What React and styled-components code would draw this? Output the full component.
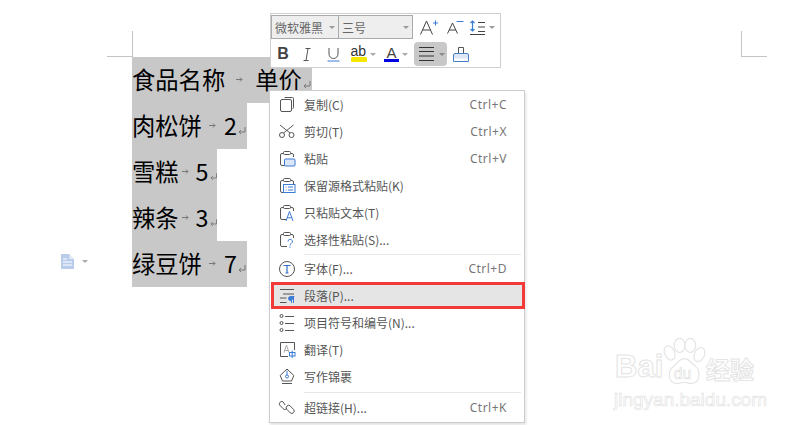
import styled, { createGlobalStyle } from "styled-components";

const GlobalStyle = createGlobalStyle`
  html, body {
    margin: 0;
    background: #fff;
    overflow: hidden;
  }
  #root {
    width: 801px;
    height: 425px;
  }
`;

const YAHEI = `"Noto Sans CJK SC", "Liberation Sans", sans-serif`;

const lines = [
  { name: "食品名称", tab1: 11, tab2: 12, price: "单价", tail: 10 },
  { name: "肉松饼", tab1: 7, tab2: 8, price: "2", tail: 10 },
  { name: "雪糕", tab1: 3.5, tab2: 6.5, price: "5", tail: 8.5 },
  { name: "辣条", tab1: 3.5, tab2: 6.5, price: "3", tail: 8.5 },
  { name: "绿豆饼", tab1: 7, tab2: 8, price: "7", tail: 10 },
];

const blue = "#3a7bd5";
const dark = "#555";

function Svg({ children }) {
  return (
    <svg width="18" height="18" viewBox="0 0 18 18" fill="none" stroke={dark} strokeWidth="1">
      {children}
    </svg>
  );
}

const CopyIcon = () => (
  <Svg><path d="M6.500 1.500h8a1 1 0 0 1 1 1v9a1 1 0 0 1-1 1" /><rect x="2.500" y="3.500" width="11" height="12" rx="1.500" /></Svg>
);
const CutIcon = () => (
  <Svg>
    <circle cx="4" cy="12" r="2.500" /><circle cx="13.500" cy="12" r="2.500" />
    <path d="M5.500 10 15.500 2M12 10 2 2" />
  </Svg>
);
const Clipboard = ({ children }) => (
  <Svg>
    <path d="M9 15.500H4A1.500 1.500 0 0 1 2.500 14V5A1.500 1.500 0 0 1 4 3.500h10A1.500 1.500 0 0 1 15.500 5v2" />
    <rect x="5.500" y="1.500" width="7" height="3" rx="1" fill="#fff" />
    {children}
  </Svg>
);
const PasteIcon = () => (
  <Clipboard><rect x="6.500" y="9" width="10.500" height="7" rx="1" fill="#dbe7f8" stroke={blue} /></Clipboard>
);
const KeepIcon = () => (
  <Clipboard>
    <rect x="5.500" y="7.500" width="11.500" height="8" fill="#fff" stroke={blue} />
    <path d="M7.500 10h1M7.500 13h1M10 10h5M10 13h5" stroke={blue} />
  </Clipboard>
);
const TextPasteIcon = () => (
  <Clipboard><path d="M8 17 11.500 7.500 15 17M9.200 13.800h4.600" stroke={blue} fill="#fff" /></Clipboard>
);
const SpecialIcon = () => (
  <Clipboard><path d="M10 10.500a2.200 2.200 0 1 1 3.300 1.900c-.9.500-1.300 1-1.300 2M12 15.500v1.200" stroke={blue} /></Clipboard>
);
const FontIcon = () => (
  <Svg><circle cx="9" cy="9" r="7.500" /><path d="M5.500 5.500h7M9 5.500v7.500M7.500 13h3" stroke="#2f6fc4" strokeWidth="1.200" /></Svg>
);
const ParagraphIcon = () => (
  <Svg>
    <path d="M2 2.500h14M5 7h11M2 11h6.500M2 15.500h6.500" />
    <path d="M13.500 9.500v6.500M15.500 9.500v6.500" stroke={blue} />
    <path d="M16 9.500h-3.500a2 2 0 0 0 0 4h1z" fill={blue} stroke={blue} />
  </Svg>
);
const ListIcon = () => (
  <Svg>
    <circle cx="3.500" cy="2" r="1.500" /><circle cx="3.500" cy="9" r="1.500" /><circle cx="3.500" cy="16" r="1.500" />
    <path d="M7 2.500h9M7 9.500h9M7 16.500h9" />
  </Svg>
);
const TranslateIcon = () => (
  <Svg>
    <path d="M10 15.500H2.500v-14h14V9" />
    <path d="M6 11.500 8.500 4l2.500 7.500M7 9.500h3" stroke="#aaa" />
    <rect x="11.500" y="11.500" width="5.500" height="3.500" stroke={blue} /><path d="M14.200 9.500v7.500" stroke={blue} />
  </Svg>
);
const PenIcon = () => (
  <Svg>
    <path d="M9 1 15.800 7.500 13.500 13h-9L2.200 7.500zM4 15.500h10" />
    <path d="M9 2.500V7" stroke={blue} /><circle cx="9" cy="8.500" r="1.500" stroke={blue} />
  </Svg>
);
const LinkIcon = () => (
  <Svg>
    <path d="M7.200 6 5 2.800a2.400 2.400 0 0 0-3.300 3.300l3.400 3.600a2.400 2.400 0 0 0 3.400.1" />
    <path d="M9 7a2.400 2.400 0 0 1 3.400.1l3.300 3.500a2.400 2.400 0 0 1-3.300 3.400L9 10.500A2.400 2.400 0 0 1 9 7Z" />
  </Svg>
);

const menuGroups = [
  {
    pad: 2,
    items: [
      { icon: <CopyIcon />, label: "复制(C)", keys: "Ctrl+C" },
      { icon: <CutIcon />, label: "剪切(T)", keys: "Ctrl+X" },
      { icon: <PasteIcon />, label: "粘贴", keys: "Ctrl+V" },
      { icon: <KeepIcon />, label: "保留源格式粘贴(K)" },
      { icon: <TextPasteIcon />, label: "只粘贴文本(T)" },
      { icon: <SpecialIcon />, label: "选择性粘贴(S)..." },
    ],
  },
  {
    pad: 3,
    items: [
      { icon: <FontIcon />, label: "字体(F)...", keys: "Ctrl+D" },
      { icon: <ParagraphIcon />, label: "段落(P)...", marked: true },
      { icon: <ListIcon />, label: "项目符号和编号(N)..." },
      { icon: <TranslateIcon />, label: "翻译(T)" },
      { icon: <PenIcon />, label: "写作锦裹" },
    ],
  },
  { pad: 0, items: [{ icon: <LinkIcon />, label: "超链接(H)...", keys: "Ctrl+K" }] },
];

export default function App() {
  return (
    <Page>
      <GlobalStyle />
      <CropRow>
        <CropMark $side="left" />
        <CropMark $side="right" />
      </CropRow>

      <Doc>
        {lines.map((line) => (
          <TextLine key={line.name}>
            {line.name}
            <TabMark $before={line.tab1} $after={line.tab2}>
              <svg width="7" height="7" viewBox="0 0 7 7" fill="none" stroke="#777">
                <path d="M0 3.500h6M4 1.500l2 2-2 2" />
              </svg>
            </TabMark>
            {line.price}
            <ReturnMark $width={line.tail}>
              <svg width="8" height="8" viewBox="0 0 8 8" fill="none" stroke="#777">
                <path d="M7 0v5H1M3 3 1 5l2 2" />
              </svg>
            </ReturnMark>
          </TextLine>
        ))}
      </Doc>

      <SideDoc>
        <svg width="14" height="15" viewBox="0 0 14 15">
          <path d="M0 0h8l5 5v10H0z" fill="#b9cdea" />
          <path d="M8.500 0.500 13 5H8.500z" fill="#e4ecf8" />
          <path d="M2 5h4M2 8h9M2 11h9" stroke="#fff" />
        </svg>
        <Caret $color="#aaa" />
      </SideDoc>

      <Toolbar>
        <ToolRow>
          <Combo $width={68}>
            微软雅黑
            <Caret $color="#999" />
          </Combo>
          <Combo $width={75}>
            三号
            <Caret $color="#999" />
          </Combo>
          <ToolCell $width={34}>
            <svg width="18" height="15" viewBox="0 0 18 15" fill="none" stroke="#444">
              <path d="M0.500 14.500 6.500 1l6 13.500M2.500 10h8" />
              <path d="M13 3h5M15.500 0.500v5" stroke={blue} />
            </svg>
          </ToolCell>
          <ToolCell $width={18}>
            <svg width="17" height="14" viewBox="0 0 17 14" fill="none" stroke="#444">
              <path d="M0.500 13.500 5.500 3l5 10.500M2 10h7" />
              <path d="M9.500 1.500h7" stroke={blue} />
            </svg>
          </ToolCell>
          <ToolCell $width={36} $gap={4}>
            <svg width="15" height="15" viewBox="0 0 15 15" fill="none" stroke="#444">
              <path d="M8 2.500h7M8 7h7M8 11.500h7M0 14.500h15" />
              <path d="M2.500 1v10M0.500 3l2-2 2 2M0.500 9l2 2 2-2" stroke={blue} strokeWidth="1.200" />
            </svg>
            <Caret $color="#999" />
          </ToolCell>
        </ToolRow>
        <ToolRow>
          <ToolCell $width={24}><BoldGlyph>B</BoldGlyph></ToolCell>
          <ToolCell $width={23}>
            <svg width="8" height="13" viewBox="0 0 8 13" fill="none" stroke="#555">
              <path d="M2.500 0.500h5M5 0.500 3 12.500M0.500 12.500h5" />
            </svg>
          </ToolCell>
          <ToolCell $width={30}>
            <svg width="13" height="15" viewBox="0 0 13 15" fill="none" stroke="#555">
              <path d="M2 1v6a4.500 4.500 0 0 0 9 0V1" />
              <path d="M0.500 14h12" stroke={blue} />
            </svg>
          </ToolCell>
          <ToolCell $width={30}>
            <Highlighter>
              ab
              <svg width="16" height="5" viewBox="0 0 16 5"><rect width="16" height="5" rx="1" fill="#f5e700" /></svg>
            </Highlighter>
            <Caret $color="#aaa" />
          </ToolCell>
          <ToolCell $width={36}>
            <FontColor>
              A
              <svg width="15" height="3" viewBox="0 0 15 3"><rect width="15" height="3" fill="#0000e0" /></svg>
            </FontColor>
            <Caret $color="#aaa" />
          </ToolCell>
          <ToolCell $width={33} $active $gap={5}>
            <svg width="15" height="14" viewBox="0 0 15 14" stroke="#333">
              <path d="M0 0.500h15M0 4.500h15M0 9h15M0 13.500h15" />
            </svg>
            <Caret $color="#888" />
          </ToolCell>
          <ToolCell $width={27}>
            <svg width="16" height="16" viewBox="0 0 16 16" fill="none">
              <path d="M5.500 7.500V1.500h5v6" stroke="#555" />
              <path d="M0.500 15.500V9a1.500 1.500 0 0 1 1.500-1.500h12A1.500 1.500 0 0 1 15.500 9v6.500z" fill="#dce6f5" stroke="#4a7fc8" />
              <path d="M1 12.500h14v2.500H1z" fill="#fff" />
            </svg>
          </ToolCell>
        </ToolRow>
      </Toolbar>

      <Menu>
        {menuGroups.map((group, i) => (
          <MenuGroup key={i} $pad={group.pad}>
            {group.items.map((item) => (
              <MenuItem key={item.label} $marked={item.marked}>
                <MenuIcon>{item.icon}</MenuIcon>
                <MenuLabel>{item.label}</MenuLabel>
                {item.keys && <MenuKeys>{item.keys}</MenuKeys>}
              </MenuItem>
            ))}
          </MenuGroup>
        ))}
      </Menu>

      <Watermark>
        <BaiWord>Bai</BaiWord>
        <svg width="43" height="48" viewBox="0 0 52 58" fill="#fff" stroke="#e4e4e4" strokeWidth="1.400">
          <ellipse cx="8" cy="18" rx="6" ry="9" transform="rotate(-25 8 18)" />
          <ellipse cx="20" cy="9" rx="6.500" ry="8.500" />
          <ellipse cx="33" cy="9" rx="6.500" ry="8.500" />
          <ellipse cx="44" cy="20" rx="6" ry="9" transform="rotate(25 44 20)" />
          <path d="M26 25c6 0 8 6 13 9 6 4 7 20-4 21-4 .5-6-1.500-9-1.500S21 55.500 16 55c-11-1-10-17-3-21 5-3 6-9 13-9z" />
          <text x="13" y="49" fontFamily="Liberation Sans, sans-serif" fontSize="19" fill="#fff" stroke="#e4e4e4" strokeWidth="0.900">du</text>
        </svg>
        <JingWord>经验</JingWord>
        <SiteWord>jingyan.baidu.com</SiteWord>
      </Watermark>
    </Page>
  );
}

const Page = styled.div`
  position: relative;
  width: 801px;
  height: 425px;
  overflow: hidden;
  background: #fff;
  font-family: ${YAHEI};
`;

const CropRow = styled.div`
  display: flex;
  justify-content: space-between;
  padding: 31px 35px 0 107px;
`;

const CropMark = styled.div`
  box-sizing: border-box;
  width: 26px;
  height: 26px;
  border-bottom: 1px solid #c4c4c4;
  ${(p) => (p.$side === "left" ? "border-right: 1px solid #c4c4c4;" : "border-left: 1px solid #c4c4c4; margin-right: -1px;")}
`;

const Doc = styled.div`
  display: flex;
  flex-direction: column;
  align-items: flex-start;
  padding-left: 132px;
`;

const TextLine = styled.div`
  box-sizing: border-box;
  display: flex;
  align-items: center;
  height: 46px;
  padding-bottom: 2px;
  background: #c8c8c8;
  color: #000;
  font-size: 23.3px;
`;

const TabMark = styled.span`
  display: flex;
  align-items: center;
  margin: 0 ${(p) => p.$after}px 0 ${(p) => p.$before}px;
`;

const ReturnMark = styled.span`
  display: flex;
  align-items: center;
  width: ${(p) => p.$width}px;
  padding: 12px 0 0 1px;
  box-sizing: border-box;
`;

const SideDoc = styled.div`
  position: absolute;
  left: 61px;
  top: 254px;
  display: flex;
  align-items: center;
  gap: 7px;
`;

const Caret = styled.span`
  flex: none;
  width: 0;
  height: 0;
  border-left: 3px solid transparent;
  border-right: 3px solid transparent;
  border-top: 3px solid ${(p) => p.$color};
`;

const Toolbar = styled.div`
  position: absolute;
  left: 270px;
  top: 13px;
  box-sizing: border-box;
  width: 231px;
  height: 55px;
  padding: 1px 0 0 0;
  background: #fff;
  border: 1px solid #cfcfcf;
`;

const ToolRow = styled.div`
  display: flex;
  align-items: center;
  height: 24px;
  & + & {
    margin-top: 3px;
  }
`;

const Combo = styled.div`
  box-sizing: border-box;
  display: flex;
  align-items: center;
  justify-content: space-between;
  width: ${(p) => p.$width}px;
  height: 24px;
  padding: 0 3px 0 3px;
  margin-right: -1px;
  background: #eee;
  border: 1px solid #aaa;
  color: #666;
  font-size: 12px;
`;

const ToolCell = styled.div`
  box-sizing: border-box;
  display: flex;
  align-items: center;
  justify-content: center;
  gap: ${(p) => p.$gap ?? 3}px;
  width: ${(p) => p.$width}px;
  height: 24px;
  flex: none;
  padding-left: ${(p) => (p.$active ? 2 : 0)}px;
  border-radius: 4px;
  background: ${(p) => (p.$active ? "#c8c8c8" : "transparent")};
`;

const BoldGlyph = styled.span`
  font: bold 16px "Liberation Sans", sans-serif;
  color: #444;
`;

const Highlighter = styled.span`
  display: flex;
  flex-direction: column;
  align-items: flex-start;
  font: 14px/11px "Liberation Sans", sans-serif;
  color: #333;
`;

const FontColor = styled.span`
  display: flex;
  flex-direction: column;
  align-items: center;
  font: 15px/13px "Liberation Sans", sans-serif;
  color: #444;
`;

const Menu = styled.div`
  position: absolute;
  left: 269px;
  top: 90px;
  box-sizing: border-box;
  width: 256px;
  height: 333px;
  background: #fff;
  border: 1px solid #cdcdcd;
  box-shadow: 1px 2px 3px rgba(0, 0, 0, 0.12);
`;

const MenuGroup = styled.div`
  position: relative;
  padding-bottom: ${(p) => p.$pad}px;
  &:last-child {
    padding-top: 1px;
  }
  &:not(:last-child)::after {
    content: "";
    position: absolute;
    left: 34px;
    right: 3px;
    bottom: 0;
    height: 1px;
    background: #e6e6e6;
  }
`;

const MenuItem = styled.div`
  position: relative;
  box-sizing: border-box;
  display: flex;
  align-items: center;
  height: 27px;
  padding: 0 17px 0 ${(p) => (p.$marked ? 7 : 8)}px;
  ${(p) =>
    p.$marked &&
    `
    margin: 0 -1px 0 1px;
    background: #e5e5e5;
    box-shadow: inset 0 0 0 3px #f33a3a;
  `}
`;

const MenuIcon = styled.span`
  display: flex;
  width: 26px;
  flex: none;
`;

const MenuLabel = styled.span`
  flex: 1;
  color: #555;
  font-size: 12px;
`;

const MenuKeys = styled.span`
  color: #777;
  font: 12px "Noto Sans", sans-serif;
  letter-spacing: 0.5px;
`;

const Watermark = styled.div`
  position: absolute;
  left: 615px;
  top: 338px;
  display: grid;
  grid-template-columns: 48px 43px auto;
  align-items: end;
`;

const outlined = `
  color: #fff;
  -webkit-text-stroke: 1px #e4e4e4;
`;

const BaiWord = styled.span`
  ${outlined}
  font: bold 31px/38px "Liberation Sans", sans-serif;
`;

const JingWord = styled.span`
  ${outlined}
  font: bold 24px/34px ${YAHEI};
`;

const SiteWord = styled.span`
  ${outlined}
  grid-column: 1 / 4;
  -webkit-text-stroke-width: 0.7px;
  font: 19px/22px "Liberation Sans", sans-serif;
  margin: 3px 0 0 -1px;
`;
